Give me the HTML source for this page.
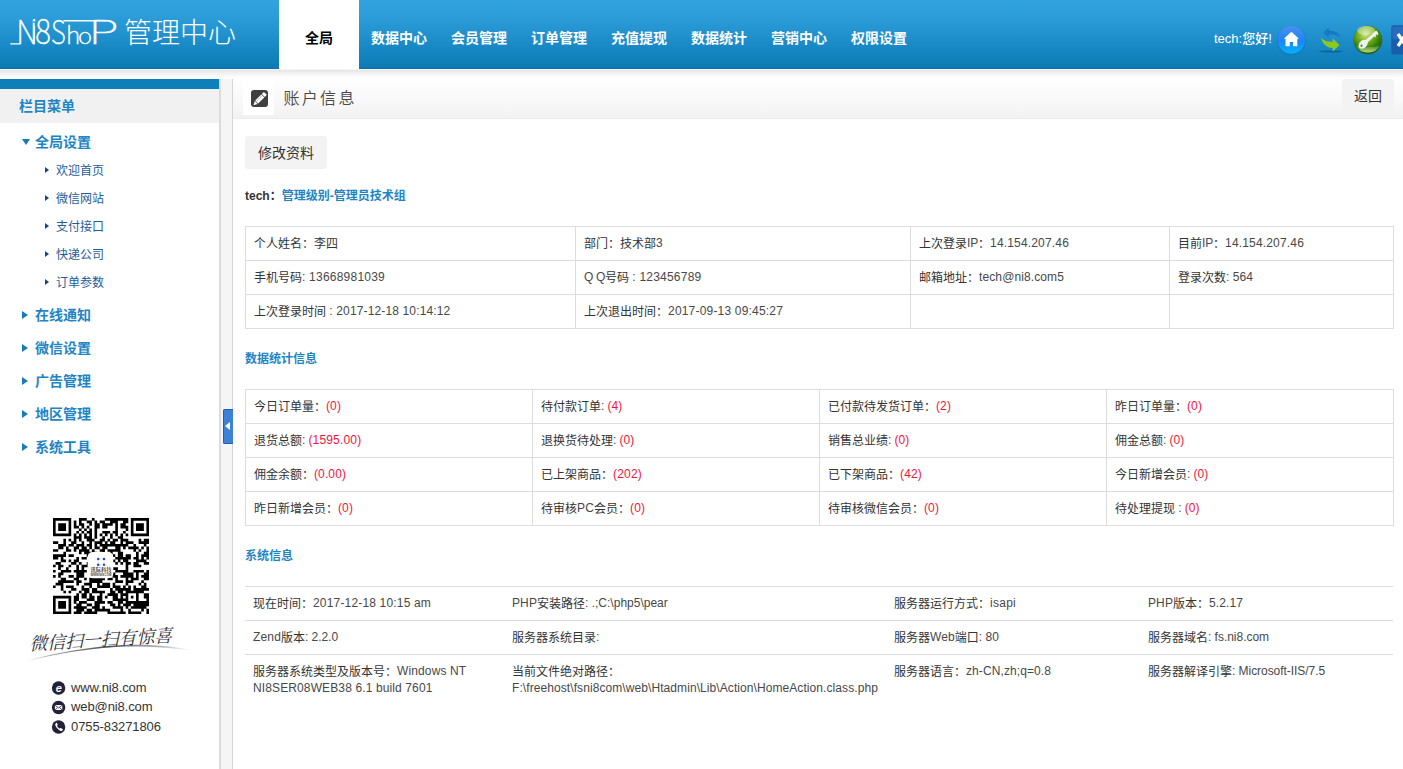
<!DOCTYPE html>
<html lang="zh-CN">
<head>
<meta charset="utf-8">
<title>Ni8Shop 管理中心</title>
<style>
*{margin:0;padding:0;box-sizing:border-box;}
html,body{width:1403px;height:769px;overflow:hidden;background:#fff;}
body{position:relative;font-family:"Liberation Sans","Noto Sans CJK SC",sans-serif;font-size:12px;color:#333;line-height:17px;}
.abs{position:absolute;}
/* ---------- header ---------- */
#hd{position:absolute;left:0;top:0;width:1403px;height:69px;background:linear-gradient(#31a3df 0,#2c9dd9 16px,#2292cf 34px,#1585c1 52px,#0e7fb9 64px,#0d7db7 64px,#0d7bb5 68px,#0a6da3 68px,#0a6da3 69px);}
#hdshadow{position:absolute;left:0;top:69px;width:1403px;height:10px;background:linear-gradient(#f6f6f2 0,#f6f6f2 1px,#e3e3e3 1px,#f1f1f1 4px,#fcfcfc 8px,#fff 10px);}
#logoTxt{position:absolute;left:124px;top:10.600px;font-size:28px;line-height:40px;color:#fff;font-weight:300;white-space:nowrap;font-family:"Noto Sans CJK SC",sans-serif;}
#nav{position:absolute;left:279px;top:0;height:69px;}
#nav a{position:absolute;top:0;width:80px;height:69px;line-height:77px;text-align:center;color:#fff;font-size:14px;font-weight:bold;text-decoration:none;white-space:nowrap;}
#nav a.on{background:#fff;color:#000;}
#hello{position:absolute;left:1214px;top:29px;font-size:13px;line-height:20px;color:#fff;white-space:nowrap;font-weight:500;}
/* ---------- sidebar ---------- */
#sb{position:absolute;left:0;top:79px;width:219px;height:690px;background:#fff;}
#sbbar{position:absolute;left:0;top:0;width:219px;height:10px;background:#0d7fb9;}
#sbtitle{position:absolute;left:0;top:10px;width:219px;height:34px;background:#f1f1f1;color:#1f84c4;font-size:14px;font-weight:bold;line-height:34px;padding-left:19px;}
#sbline{position:absolute;left:219px;top:79px;width:2px;height:690px;background:#dcdcdc;}
#gap{position:absolute;left:221px;top:79px;width:11px;height:690px;background:#f5f5f5;}
#mline{position:absolute;left:232px;top:79px;width:1px;height:690px;background:#d6d6d6;}
.g{position:absolute;left:35px;font-size:14px;font-weight:bold;color:#1f84c4;line-height:20px;white-space:nowrap;}
.s{position:absolute;left:56px;font-size:12px;color:#1f5c99;line-height:18px;margin-top:1px;white-space:nowrap;}
.ta{position:absolute;width:0;height:0;border-style:solid;}
.ct{position:absolute;left:71px;font-size:13px;color:#333;line-height:18px;white-space:nowrap;letter-spacing:-0.100px;}
/* ---------- main ---------- */
#tbar{position:absolute;left:233px;top:79px;width:1170px;height:40px;background:linear-gradient(#fefefe,#f9f9f9 50%,#f2f2f2);border-bottom:1px solid #ececec;}
#ticon{position:absolute;left:243px;top:80px;width:31px;height:35px;background:#fff;}
#ttl{position:absolute;left:283.500px;top:85px;font-size:16px;line-height:24px;letter-spacing:2.300px;color:#484848;font-weight:350;white-space:nowrap;font-family:"Noto Sans CJK SC",sans-serif;}
.btn{position:absolute;background:#f3f3f3;border-radius:3px;font-size:14px;color:#333;text-align:center;height:33px;line-height:35px;}
.h3{position:absolute;left:245px;font-size:12px;font-weight:bold;color:#1f84c4;line-height:18px;white-space:nowrap;}
table{position:absolute;left:245px;border-collapse:collapse;table-layout:fixed;}
td{border:1px solid #ddd;padding:9px 8px 6px 8px;height:34px;line-height:17px;vertical-align:top;font-size:12px;color:#333;white-space:nowrap;overflow:hidden;}
td i{font-style:normal;position:relative;top:-1px;color:#484848;}
td b{font-weight:normal;color:#f0143c;}
td b i{color:#f0143c;}
#t3 td{border-left:0;border-right:0;border-bottom:0;white-space:normal;}
</style>
</head>
<body>
<!-- HEADER -->
<div id="hd"></div>
<div id="hdshadow"></div>
<svg class="abs" style="left:5px;top:10px;" width="120" height="45" viewBox="0 0 120 45" fill="none" stroke="#fff" stroke-width="1.25" stroke-linecap="round">
<path d="M5.700 33.800H14.800"/>
<path d="M58.800 10.750H100" stroke-width="1.400"/>
<g fill="#fff" stroke="#fff" stroke-width="0.55" stroke-linejoin="round" style="vector-effect:non-scaling-stroke" font-family="Noto Sans CJK SC,Liberation Sans,sans-serif" font-weight="100">
<text vector-effect="non-scaling-stroke" transform="matrix(0.3052 0 0 0.3336 11.32 34.12)" font-size="100">N</text>
<text vector-effect="non-scaling-stroke" transform="matrix(0.1875 0 0 0.3392 26.70 34.40)" font-size="100">i</text>
<text vector-effect="non-scaling-stroke" transform="matrix(0.2989 0 0 0.3418 30.28 34.18)" font-size="100">8</text>
<text vector-effect="non-scaling-stroke" transform="matrix(0.2573 0 0 0.3327 45.99 34.19)" font-size="100">S</text>
<text vector-effect="non-scaling-stroke" transform="matrix(0.2474 0 0 0.2331 60.90 34.12)" font-size="100">h</text>
<text vector-effect="non-scaling-stroke" transform="matrix(0.2385 0 0 0.2264 73.08 34.30)" font-size="100">o</text>
<text vector-effect="non-scaling-stroke" transform="matrix(0.5011 0 0 0.3267 83.56 34.12)" font-size="100">P</text>
</g><rect x="27.500" y="11.300" width="3" height="1.500" fill="#2d9eda" stroke="none"/></svg>
<div id="logoTxt">管理中心</div>
<div id="nav">
<a class="on" style="left:0">全局</a>
<a style="left:80px">数据中心</a>
<a style="left:160px">会员管理</a>
<a style="left:240px">订单管理</a>
<a style="left:320px">充值提现</a>
<a style="left:400px">数据统计</a>
<a style="left:480px">营销中心</a>
<a style="left:560px">权限设置</a>
</div>
<div id="hello">tech:您好!</div>
<svg class="abs" style="left:1270px;top:15px;" width="133" height="50" viewBox="0 0 133 50">
<defs>
<linearGradient id="hb" x1="0" y1="0" x2="0" y2="1"><stop offset="0" stop-color="#4c8fee"/><stop offset="0.55" stop-color="#1a86f5"/><stop offset="1" stop-color="#00b4ff"/></linearGradient>
<radialGradient id="gb" cx="0.42" cy="0.3" r="0.75"><stop offset="0" stop-color="#cfe88a"/><stop offset="0.35" stop-color="#7fb520"/><stop offset="0.7" stop-color="#2f7d0a"/><stop offset="1" stop-color="#1d5c06"/></radialGradient>
<linearGradient id="gb2" x1="0" y1="0" x2="0" y2="1"><stop offset="0" stop-color="#fff" stop-opacity="0"/><stop offset="1" stop-color="#d7f07a" stop-opacity="0.85"/></linearGradient>
</defs>
<!-- home -->
<circle cx="21.300" cy="25.300" r="14.600" fill="#1565b0" opacity="0.55"/>
<circle cx="21.300" cy="24.800" r="14" fill="url(#hb)"/>
<path d="M21.400 16.800L13.800 23.700h1.700v7.600h4.300v-4.400h3.200v4.400h4.300v-7.600h1.700z" fill="#fff"/>
<!-- refresh -->
<ellipse cx="61" cy="36.500" rx="12" ry="0.900" fill="#0b5a8f" opacity="0.8"/>
<path d="M53.300 17.700l5.400-5.200v3.100c5.200-.2 9.900 1.700 11.900 6.800-3.200-2.600-7.200-3.300-11.900-2.900v3.500z" fill="#1579c4"/>
<path d="M69.500 30l-6.800-6.700v3.400c-4.400.3-8.500-.6-11.500-4 1 6.200 5.600 9.900 11.500 10.300v3.400z" fill="#8cc820"/>
<!-- green ball -->
<circle cx="97.900" cy="25.200" r="14.500" fill="#2a5f0c" opacity="0.5"/>
<circle cx="97.900" cy="24.900" r="14" fill="url(#gb)"/>
<path d="M85.500 30a14 14 0 0 0 24.800 0c-8 3-17 3-24.800 0z" fill="url(#gb2)"/>
<ellipse cx="96" cy="15.500" rx="9" ry="4.500" fill="#fff" opacity="0.35"/>
<g transform="rotate(-42 97.900 25)"><rect x="95" y="23.500" width="15.500" height="3" rx="1" fill="#f1f1f1"/><rect x="105" y="25.500" width="1.800" height="2.300" fill="#f1f1f1"/><rect x="108" y="25.500" width="1.800" height="2.300" fill="#f1f1f1"/><ellipse cx="91.500" cy="25" rx="5.200" ry="3.800" fill="#f1f1f1"/><circle cx="89.300" cy="25" r="1.100" fill="#3d8a12"/></g>
<!-- close -->
<rect x="121.300" y="10.200" width="20" height="29.200" rx="2.500" fill="#1b5cab"/>
<rect x="122.300" y="11.400" width="19" height="13" rx="1.500" fill="#2f74c4" opacity="0.7"/>
<path d="M128 19l8 12M128 31l8-12" stroke="#fff" stroke-width="3.200" fill="none"/>
</svg>

<!-- SIDEBAR -->
<div id="sb">
<div id="sbbar"></div>
<div id="sbtitle">栏目菜单</div>
</div>
<div id="sbline"></div><div id="gap"></div><div id="mline"></div>
<div class="ta" style="left:21.500px;top:138.800px;border-width:6.500px 4px 0 4px;border-color:#1a7ab8 transparent transparent transparent;"></div>
<div class="g" style="top:132px;">全局设置</div>
<div class="ta" style="left:45px;top:167.0px;border-width:3px 0 3px 4px;border-color:transparent transparent transparent #17468a;"></div>
<div class="s" style="top:161.0px;">欢迎首页</div>
<div class="ta" style="left:45px;top:195.0px;border-width:3px 0 3px 4px;border-color:transparent transparent transparent #17468a;"></div>
<div class="s" style="top:189.0px;">微信网站</div>
<div class="ta" style="left:45px;top:223.0px;border-width:3px 0 3px 4px;border-color:transparent transparent transparent #17468a;"></div>
<div class="s" style="top:217.0px;">支付接口</div>
<div class="ta" style="left:45px;top:251.0px;border-width:3px 0 3px 4px;border-color:transparent transparent transparent #17468a;"></div>
<div class="s" style="top:245.0px;">快递公司</div>
<div class="ta" style="left:45px;top:279.0px;border-width:3px 0 3px 4px;border-color:transparent transparent transparent #17468a;"></div>
<div class="s" style="top:273.0px;">订单参数</div>
<div class="ta" style="left:21.500px;top:311.0px;border-width:4px 0 4px 6.500px;border-color:transparent transparent transparent #1a7ab8;"></div>
<div class="g" style="top:305px;">在线通知</div>
<div class="ta" style="left:21.500px;top:344.0px;border-width:4px 0 4px 6.500px;border-color:transparent transparent transparent #1a7ab8;"></div>
<div class="g" style="top:338px;">微信设置</div>
<div class="ta" style="left:21.500px;top:377.0px;border-width:4px 0 4px 6.500px;border-color:transparent transparent transparent #1a7ab8;"></div>
<div class="g" style="top:371px;">广告管理</div>
<div class="ta" style="left:21.500px;top:410.0px;border-width:4px 0 4px 6.500px;border-color:transparent transparent transparent #1a7ab8;"></div>
<div class="g" style="top:404px;">地区管理</div>
<div class="ta" style="left:21.500px;top:443.0px;border-width:4px 0 4px 6.500px;border-color:transparent transparent transparent #1a7ab8;"></div>
<div class="g" style="top:437px;">系统工具</div>
<div class="abs" style="left:223px;top:409px;width:9.500px;height:35px;background:#3d82d8;border:1px solid #1c60b8;border-right:0;border-radius:2px 0 0 2px;"></div>
<div class="ta" style="left:225px;top:421.5px;border-width:4.5px 5px 4.5px 0;border-color:transparent #fff transparent transparent;"></div>
<svg class="abs" style="left:53px;top:518px;" width="96" height="96" viewBox="0 0 96 96"><rect width="96" height="96" fill="#fff"/><path d="M0.00 0.00h18.21v2.64h-18.21zM25.95 0.00h7.83v2.64h-7.83zM38.92 0.00h2.64v2.64h-2.64zM51.89 0.00h23.40v2.64h-23.40zM77.84 0.00h18.21v2.64h-18.21zM0.00 2.59h2.64v2.64h-2.64zM15.57 2.59h2.64v2.64h-2.64zM20.76 2.59h2.64v2.64h-2.64zM25.95 2.59h2.64v2.64h-2.64zM33.73 2.59h5.24v2.64h-5.24zM41.51 2.59h2.64v2.64h-2.64zM46.70 2.59h5.24v2.64h-5.24zM57.08 2.59h7.83v2.64h-7.83zM70.05 2.59h5.24v2.64h-5.24zM77.84 2.59h2.64v2.64h-2.64zM93.41 2.59h2.64v2.64h-2.64zM0.00 5.19h2.64v2.64h-2.64zM5.19 5.19h7.83v2.64h-7.83zM15.57 5.19h2.64v2.64h-2.64zM20.76 5.19h2.64v2.64h-2.64zM25.95 5.19h5.24v2.64h-5.24zM36.32 5.19h2.64v2.64h-2.64zM41.51 5.19h5.24v2.64h-5.24zM49.30 5.19h10.43v2.64h-10.43zM62.27 5.19h2.64v2.64h-2.64zM67.46 5.19h5.24v2.64h-5.24zM77.84 5.19h2.64v2.64h-2.64zM83.03 5.19h7.83v2.64h-7.83zM93.41 5.19h2.64v2.64h-2.64zM0.00 7.78h2.64v2.64h-2.64zM5.19 7.78h7.83v2.64h-7.83zM15.57 7.78h2.64v2.64h-2.64zM20.76 7.78h5.24v2.64h-5.24zM28.54 7.78h2.64v2.64h-2.64zM33.73 7.78h2.64v2.64h-2.64zM41.51 7.78h5.24v2.64h-5.24zM49.30 7.78h5.24v2.64h-5.24zM62.27 7.78h2.64v2.64h-2.64zM67.46 7.78h7.83v2.64h-7.83zM77.84 7.78h2.64v2.64h-2.64zM83.03 7.78h7.83v2.64h-7.83zM93.41 7.78h2.64v2.64h-2.64zM0.00 10.38h2.64v2.64h-2.64zM5.19 10.38h7.83v2.64h-7.83zM15.57 10.38h2.64v2.64h-2.64zM25.95 10.38h2.64v2.64h-2.64zM31.14 10.38h2.64v2.64h-2.64zM36.32 10.38h2.64v2.64h-2.64zM41.51 10.38h2.64v2.64h-2.64zM62.27 10.38h2.64v2.64h-2.64zM72.65 10.38h2.64v2.64h-2.64zM77.84 10.38h2.64v2.64h-2.64zM83.03 10.38h7.83v2.64h-7.83zM93.41 10.38h2.64v2.64h-2.64zM0.00 12.97h2.64v2.64h-2.64zM15.57 12.97h2.64v2.64h-2.64zM23.35 12.97h2.64v2.64h-2.64zM28.54 12.97h2.64v2.64h-2.64zM33.73 12.97h5.24v2.64h-5.24zM41.51 12.97h2.64v2.64h-2.64zM49.30 12.97h7.83v2.64h-7.83zM59.68 12.97h5.24v2.64h-5.24zM70.05 12.97h2.64v2.64h-2.64zM77.84 12.97h2.64v2.64h-2.64zM93.41 12.97h2.64v2.64h-2.64zM0.00 15.57h18.21v2.64h-18.21zM20.76 15.57h2.64v2.64h-2.64zM25.95 15.57h2.64v2.64h-2.64zM31.14 15.57h2.64v2.64h-2.64zM36.32 15.57h2.64v2.64h-2.64zM41.51 15.57h2.64v2.64h-2.64zM46.70 15.57h2.64v2.64h-2.64zM51.89 15.57h2.64v2.64h-2.64zM57.08 15.57h2.64v2.64h-2.64zM62.27 15.57h2.64v2.64h-2.64zM67.46 15.57h2.64v2.64h-2.64zM72.65 15.57h2.64v2.64h-2.64zM77.84 15.57h18.21v2.64h-18.21zM20.76 18.16h7.83v2.64h-7.83zM31.14 18.16h7.83v2.64h-7.83zM41.51 18.16h2.64v2.64h-2.64zM49.30 18.16h2.64v2.64h-2.64zM57.08 18.16h2.64v2.64h-2.64zM64.86 18.16h5.24v2.64h-5.24zM10.38 20.76h2.64v2.64h-2.64zM15.57 20.76h2.64v2.64h-2.64zM20.76 20.76h2.64v2.64h-2.64zM25.95 20.76h2.64v2.64h-2.64zM33.73 20.76h7.83v2.64h-7.83zM46.70 20.76h5.24v2.64h-5.24zM54.49 20.76h2.64v2.64h-2.64zM59.68 20.76h5.24v2.64h-5.24zM67.46 20.76h7.83v2.64h-7.83zM85.62 20.76h2.64v2.64h-2.64zM90.81 20.76h5.24v2.64h-5.24zM0.00 23.35h5.24v2.64h-5.24zM10.38 23.35h2.64v2.64h-2.64zM18.16 23.35h5.24v2.64h-5.24zM28.54 23.35h2.64v2.64h-2.64zM36.32 23.35h2.64v2.64h-2.64zM41.51 23.35h7.83v2.64h-7.83zM51.89 23.35h2.64v2.64h-2.64zM57.08 23.35h5.24v2.64h-5.24zM67.46 23.35h2.64v2.64h-2.64zM72.65 23.35h7.83v2.64h-7.83zM85.62 23.35h10.43v2.64h-10.43zM5.19 25.95h7.83v2.64h-7.83zM15.57 25.95h5.24v2.64h-5.24zM23.35 25.95h7.83v2.64h-7.83zM33.73 25.95h5.24v2.64h-5.24zM41.51 25.95h2.64v2.64h-2.64zM46.70 25.95h28.59v2.64h-28.59zM80.43 25.95h2.64v2.64h-2.64zM90.81 25.95h2.64v2.64h-2.64zM5.19 28.54h5.24v2.64h-5.24zM12.97 28.54h2.64v2.64h-2.64zM20.76 28.54h5.24v2.64h-5.24zM28.54 28.54h5.24v2.64h-5.24zM36.32 28.54h2.64v2.64h-2.64zM41.51 28.54h5.24v2.64h-5.24zM49.30 28.54h5.24v2.64h-5.24zM62.27 28.54h5.24v2.64h-5.24zM70.05 28.54h2.64v2.64h-2.64zM75.24 28.54h10.43v2.64h-10.43zM88.22 28.54h2.64v2.64h-2.64zM93.41 28.54h2.64v2.64h-2.64zM0.00 31.14h5.24v2.64h-5.24zM12.97 31.14h5.24v2.64h-5.24zM20.76 31.14h2.64v2.64h-2.64zM25.95 31.14h10.43v2.64h-10.43zM38.92 31.14h2.64v2.64h-2.64zM46.70 31.14h5.24v2.64h-5.24zM54.49 31.14h13.02v2.64h-13.02zM80.43 31.14h2.64v2.64h-2.64zM85.62 31.14h2.64v2.64h-2.64zM93.41 31.14h2.64v2.64h-2.64zM10.38 33.73h2.64v2.64h-2.64zM25.95 33.73h2.64v2.64h-2.64zM31.14 33.73h13.02v2.64h-13.02zM49.30 33.73h2.64v2.64h-2.64zM57.08 33.73h2.64v2.64h-2.64zM64.86 33.73h5.24v2.64h-5.24zM83.03 33.73h2.64v2.64h-2.64zM90.81 33.73h5.24v2.64h-5.24zM0.00 36.32h13.02v2.64h-13.02zM15.57 36.32h5.24v2.64h-5.24zM33.73 36.32h2.64v2.64h-2.64zM59.68 36.32h2.64v2.64h-2.64zM64.86 36.32h5.24v2.64h-5.24zM72.65 36.32h5.24v2.64h-5.24zM83.03 36.32h2.64v2.64h-2.64zM88.22 36.32h7.83v2.64h-7.83zM0.00 38.92h5.24v2.64h-5.24zM7.78 38.92h2.64v2.64h-2.64zM23.35 38.92h2.64v2.64h-2.64zM28.54 38.92h5.24v2.64h-5.24zM62.27 38.92h15.62v2.64h-15.62zM80.43 38.92h5.24v2.64h-5.24zM88.22 38.92h2.64v2.64h-2.64zM93.41 38.92h2.64v2.64h-2.64zM7.78 41.51h5.24v2.64h-5.24zM15.57 41.51h2.64v2.64h-2.64zM20.76 41.51h5.24v2.64h-5.24zM59.68 41.51h2.64v2.64h-2.64zM64.86 41.51h2.64v2.64h-2.64zM70.05 41.51h5.24v2.64h-5.24zM83.03 41.51h10.43v2.64h-10.43zM2.59 44.11h5.24v2.64h-5.24zM18.16 44.11h5.24v2.64h-5.24zM25.95 44.11h2.64v2.64h-2.64zM33.73 44.11h2.64v2.64h-2.64zM62.27 44.11h2.64v2.64h-2.64zM67.46 44.11h2.64v2.64h-2.64zM72.65 44.11h5.24v2.64h-5.24zM80.43 44.11h5.24v2.64h-5.24zM90.81 44.11h5.24v2.64h-5.24zM0.00 46.70h2.64v2.64h-2.64zM5.19 46.70h5.24v2.64h-5.24zM15.57 46.70h2.64v2.64h-2.64zM23.35 46.70h2.64v2.64h-2.64zM28.54 46.70h7.83v2.64h-7.83zM72.65 46.70h2.64v2.64h-2.64zM80.43 46.70h7.83v2.64h-7.83zM5.19 49.30h2.64v2.64h-2.64zM12.97 49.30h2.64v2.64h-2.64zM23.35 49.30h2.64v2.64h-2.64zM28.54 49.30h2.64v2.64h-2.64zM59.68 49.30h5.24v2.64h-5.24zM72.65 49.30h2.64v2.64h-2.64zM0.00 51.89h2.64v2.64h-2.64zM7.78 51.89h10.43v2.64h-10.43zM20.76 51.89h13.02v2.64h-13.02zM62.27 51.89h13.02v2.64h-13.02zM80.43 51.89h10.43v2.64h-10.43zM93.41 51.89h2.64v2.64h-2.64zM5.19 54.49h5.24v2.64h-5.24zM23.35 54.49h7.83v2.64h-7.83zM59.68 54.49h2.64v2.64h-2.64zM70.05 54.49h10.43v2.64h-10.43zM83.03 54.49h2.64v2.64h-2.64zM90.81 54.49h5.24v2.64h-5.24zM0.00 57.08h2.64v2.64h-2.64zM5.19 57.08h2.64v2.64h-2.64zM15.57 57.08h5.24v2.64h-5.24zM23.35 57.08h7.83v2.64h-7.83zM59.68 57.08h5.24v2.64h-5.24zM67.46 57.08h13.02v2.64h-13.02zM83.03 57.08h2.64v2.64h-2.64zM88.22 57.08h7.83v2.64h-7.83zM7.78 59.68h5.24v2.64h-5.24zM20.76 59.68h5.24v2.64h-5.24zM31.14 59.68h2.64v2.64h-2.64zM36.32 59.68h15.62v2.64h-15.62zM54.49 59.68h5.24v2.64h-5.24zM62.27 59.68h2.64v2.64h-2.64zM72.65 59.68h2.64v2.64h-2.64zM77.84 59.68h7.83v2.64h-7.83zM90.81 59.68h5.24v2.64h-5.24zM5.19 62.27h15.62v2.64h-15.62zM23.35 62.27h5.24v2.64h-5.24zM36.32 62.27h13.02v2.64h-13.02zM62.27 62.27h7.83v2.64h-7.83zM72.65 62.27h7.83v2.64h-7.83zM88.22 62.27h2.64v2.64h-2.64zM2.59 64.86h7.83v2.64h-7.83zM23.35 64.86h2.64v2.64h-2.64zM31.14 64.86h7.83v2.64h-7.83zM44.11 64.86h2.64v2.64h-2.64zM49.30 64.86h7.83v2.64h-7.83zM59.68 64.86h2.64v2.64h-2.64zM72.65 64.86h2.64v2.64h-2.64zM85.62 64.86h2.64v2.64h-2.64zM90.81 64.86h2.64v2.64h-2.64zM0.00 67.46h2.64v2.64h-2.64zM7.78 67.46h2.64v2.64h-2.64zM12.97 67.46h7.83v2.64h-7.83zM28.54 67.46h2.64v2.64h-2.64zM36.32 67.46h2.64v2.64h-2.64zM44.11 67.46h13.02v2.64h-13.02zM59.68 67.46h7.83v2.64h-7.83zM70.05 67.46h2.64v2.64h-2.64zM75.24 67.46h2.64v2.64h-2.64zM80.43 67.46h2.64v2.64h-2.64zM88.22 67.46h5.24v2.64h-5.24zM7.78 70.05h2.64v2.64h-2.64zM18.16 70.05h5.24v2.64h-5.24zM28.54 70.05h7.83v2.64h-7.83zM38.92 70.05h5.24v2.64h-5.24zM57.08 70.05h2.64v2.64h-2.64zM62.27 70.05h15.62v2.64h-15.62zM80.43 70.05h15.62v2.64h-15.62zM10.38 72.65h2.64v2.64h-2.64zM15.57 72.65h2.64v2.64h-2.64zM25.95 72.65h2.64v2.64h-2.64zM31.14 72.65h5.24v2.64h-5.24zM38.92 72.65h13.02v2.64h-13.02zM57.08 72.65h5.24v2.64h-5.24zM64.86 72.65h5.24v2.64h-5.24zM72.65 72.65h18.21v2.64h-18.21zM23.35 75.24h2.64v2.64h-2.64zM28.54 75.24h5.24v2.64h-5.24zM36.32 75.24h2.64v2.64h-2.64zM46.70 75.24h2.64v2.64h-2.64zM54.49 75.24h10.43v2.64h-10.43zM67.46 75.24h7.83v2.64h-7.83zM83.03 75.24h2.64v2.64h-2.64zM90.81 75.24h5.24v2.64h-5.24zM0.00 77.84h18.21v2.64h-18.21zM20.76 77.84h5.24v2.64h-5.24zM28.54 77.84h5.24v2.64h-5.24zM36.32 77.84h5.24v2.64h-5.24zM44.11 77.84h5.24v2.64h-5.24zM51.89 77.84h2.64v2.64h-2.64zM59.68 77.84h5.24v2.64h-5.24zM67.46 77.84h2.64v2.64h-2.64zM72.65 77.84h2.64v2.64h-2.64zM77.84 77.84h2.64v2.64h-2.64zM83.03 77.84h2.64v2.64h-2.64zM90.81 77.84h5.24v2.64h-5.24zM0.00 80.43h2.64v2.64h-2.64zM15.57 80.43h2.64v2.64h-2.64zM20.76 80.43h5.24v2.64h-5.24zM33.73 80.43h7.83v2.64h-7.83zM44.11 80.43h5.24v2.64h-5.24zM59.68 80.43h15.62v2.64h-15.62zM83.03 80.43h2.64v2.64h-2.64zM93.41 80.43h2.64v2.64h-2.64zM0.00 83.03h2.64v2.64h-2.64zM5.19 83.03h7.83v2.64h-7.83zM15.57 83.03h2.64v2.64h-2.64zM20.76 83.03h2.64v2.64h-2.64zM25.95 83.03h7.83v2.64h-7.83zM41.51 83.03h10.43v2.64h-10.43zM54.49 83.03h5.24v2.64h-5.24zM64.86 83.03h5.24v2.64h-5.24zM72.65 83.03h23.40v2.64h-23.40zM0.00 85.62h2.64v2.64h-2.64zM5.19 85.62h7.83v2.64h-7.83zM15.57 85.62h2.64v2.64h-2.64zM23.35 85.62h5.24v2.64h-5.24zM33.73 85.62h5.24v2.64h-5.24zM41.51 85.62h5.24v2.64h-5.24zM57.08 85.62h5.24v2.64h-5.24zM64.86 85.62h2.64v2.64h-2.64zM70.05 85.62h7.83v2.64h-7.83zM80.43 85.62h15.62v2.64h-15.62zM0.00 88.22h2.64v2.64h-2.64zM5.19 88.22h7.83v2.64h-7.83zM15.57 88.22h2.64v2.64h-2.64zM20.76 88.22h13.02v2.64h-13.02zM38.92 88.22h7.83v2.64h-7.83zM49.30 88.22h2.64v2.64h-2.64zM59.68 88.22h10.43v2.64h-10.43zM72.65 88.22h2.64v2.64h-2.64zM77.84 88.22h15.62v2.64h-15.62zM0.00 90.81h2.64v2.64h-2.64zM15.57 90.81h2.64v2.64h-2.64zM23.35 90.81h7.83v2.64h-7.83zM33.73 90.81h5.24v2.64h-5.24zM41.51 90.81h15.62v2.64h-15.62zM67.46 90.81h2.64v2.64h-2.64zM75.24 90.81h2.64v2.64h-2.64zM88.22 90.81h2.64v2.64h-2.64zM93.41 90.81h2.64v2.64h-2.64zM0.00 93.41h18.21v2.64h-18.21zM20.76 93.41h7.83v2.64h-7.83zM31.14 93.41h13.02v2.64h-13.02zM54.49 93.41h18.21v2.64h-18.21zM75.24 93.41h13.02v2.64h-13.02zM93.41 93.41h2.64v2.64h-2.64z" fill="#000"/><rect x="34.600" y="34" width="25.700" height="26.300" rx="5" fill="#fff"/><circle cx="45.2" cy="41.0" r="1.25" fill="#2446cc"/><circle cx="51.0" cy="41.0" r="1.25" fill="#2446cc"/><circle cx="45.2" cy="46.8" r="1.25" fill="#2446cc"/><circle cx="51.0" cy="46.8" r="1.25" fill="#2446cc"/><path d="M46.600 41h3M46.600 46.800h3M45.200 42.400v3M51 42.400v3" stroke="#c8ccd8" stroke-width="0.500"/><text x="47.900" y="54.400" font-size="5.200" text-anchor="middle" fill="#3a3a3a" font-family="Noto Serif CJK SC,serif" font-weight="700" textLength="21" lengthAdjust="spacing">讯际科技</text><text x="47.900" y="58.200" font-size="3.300" text-anchor="middle" fill="#444" font-family="Liberation Sans,sans-serif" font-weight="bold" textLength="21" lengthAdjust="spacingAndGlyphs">WWW.NI8.COM</text></svg>
<svg class="abs" style="left:15px;top:615px;" width="200" height="55" viewBox="0 0 200 55"><defs><linearGradient id="sw" x1="0" x2="1" y1="0" y2="0"><stop offset="0" stop-color="#999" stop-opacity="0"/><stop offset="0.18" stop-color="#777" stop-opacity="0.7"/><stop offset="0.5" stop-color="#444" stop-opacity="0.95"/><stop offset="0.8" stop-color="#888" stop-opacity="0.6"/><stop offset="1" stop-color="#bbb" stop-opacity="0"/></linearGradient></defs><path d="M6 47.500 C 40 37.500, 80 30.800, 112 29.800 C 140 29.200, 165 32, 182 36.500 C 160 33, 138 31.400, 112 31.600 C 82 32.200, 42 38.500, 6 47.500z" fill="url(#sw)"/><text transform="translate(14.500,35.500) rotate(-3.600) skewX(-16)" font-size="18" font-family="Noto Serif CJK SC,serif" font-weight="400" fill="#30303a" textLength="143" lengthAdjust="spacing">微信扫一扫有惊喜</text></svg>
<div class="ct" style="top:678.5px;">www.ni8.com</div>
<div class="ct" style="top:698.0px;">web@ni8.com</div>
<div class="ct" style="top:717.5px;">0755-83271806</div>
<svg class="abs" style="left:51px;top:680px;" width="16" height="56" viewBox="0 0 16 56"><circle cx="7.6" cy="8.0" r="6.7" fill="#24223b"/><circle cx="7.6" cy="27.5" r="6.7" fill="#24223b"/><circle cx="7.6" cy="47.0" r="6.7" fill="#24223b"/><text x="7.8" y="11.6" font-size="11" font-weight="bold" font-style="italic" text-anchor="middle" fill="#fff" font-family="Liberation Sans,sans-serif">e</text><rect x="3.9" y="24.9" width="7.4" height="5.2" rx="0.8" fill="#fff"/><path d="M4.2 25.3l3.4 2.6 3.4-2.6M4.2 29.8l2.4-2.2M11 29.8l-2.4-2.2" stroke="#24223b" stroke-width="0.8" fill="none"/><path d="M5 43.2c-.9.5-1 1.5-.5 2.6 1 2.1 2.6 3.8 4.7 4.9 1 .5 2 .3 2.5-.5.3-.4.2-.8-.2-1.1l-1.3-.9c-.4-.3-.8-.2-1.1.1l-.4.5c-1.200-.7-2.100-1.700-2.800-3l.5-.4c.4-.3.500-.7.200-1.100l-.8-1.300c-.2-.4-.6-.5-.8-.2z" fill="#fff"/></svg>
<!--SIDEITEMS-->

<!-- MAIN -->
<div id="tbar"></div>
<div id="ticon"></div>
<svg class="abs" style="left:251px;top:90px;" width="17" height="17" viewBox="0 0 17 17"><rect width="17" height="17" rx="3" fill="#403e3e"/><g transform="rotate(45 8.400 9.300)" fill="#fff"><rect x="6.300" y="0.900" width="4.200" height="2.900"/><rect x="6.300" y="4.500" width="4.200" height="8.700"/><path d="M6.300 13.800h4.200l-2.100 3.800z"/><path d="M7.700 5.200v7.400" stroke="#403e3e" stroke-width="0.450" stroke-dasharray="1 0.600"/></g></svg>
<div id="ttl">账户信息</div>
<div class="btn" style="left:1342px;top:79px;width:52px;">返回</div>
<div class="btn" style="left:245px;top:136px;width:82px;">修改资料</div>
<div class="abs" style="left:245px;top:187px;font-size:12px;font-weight:bold;line-height:18px;white-space:nowrap;color:#333;">tech：<span style="color:#1f84c4">管理级别-管理员技术组</span></div>
<table id="t1" style="top:226px;width:1148px;">
<colgroup><col style="width:330px"><col style="width:335px"><col style="width:259px"><col style="width:224px"></colgroup>
<tr><td>个人姓名：李四</td><td>部门：技术部<i style="letter-spacing:0.33px">3</i></td><td>上次登录<i style="letter-spacing:-0.17px">IP</i>：<i style="letter-spacing:0.17px">14.154.207.46</i></td><td>目前<i style="letter-spacing:-0.17px">IP</i>：<i style="letter-spacing:0.17px">14.154.207.46</i></td></tr>
<tr><td>手机号码<i style="letter-spacing:0.22px">: 13668981039</i></td><td><i style="letter-spacing:-0.33px">Q Q</i>号码 <i style="letter-spacing:0.21px">: 123456789</i></td><td>邮箱地址：<i style="letter-spacing:0.11px">tech@ni8.com5</i></td><td>登录次数<i style="letter-spacing:0.06px">: 564</i></td></tr>
<tr><td>上次登录时间 <i style="letter-spacing:0.14px">: 2017-12-18 10:14:12</i></td><td>上次退出时间：<i style="letter-spacing:0.19px">2017-09-13 09:45:27</i></td><td></td><td></td></tr>
</table>
<div class="h3" style="top:350px;">数据统计信息</div>
<table id="t2" style="top:389px;width:1148px;">
<colgroup><col style="width:287px"><col style="width:287px"><col style="width:287px"><col style="width:287px"></colgroup>
<tr><td>今日订单量：<b><i style="letter-spacing:0.11px">(0)</i></b></td><td>待付款订单<i style="letter-spacing:-0.33px">:</i> <b><i style="letter-spacing:0.11px">(4)</i></b></td><td>已付款待发货订单：<b><i style="letter-spacing:0.11px">(2)</i></b></td><td>昨日订单量：<b><i style="letter-spacing:0.11px">(0)</i></b></td></tr>
<tr><td>退货总额<i style="letter-spacing:-0.33px">:</i> <b><i style="letter-spacing:0.18px">(1595.00)</i></b></td><td>退换货待处理<i style="letter-spacing:-0.33px">:</i> <b><i style="letter-spacing:0.11px">(0)</i></b></td><td>销售总业绩<i style="letter-spacing:-0.33px">:</i> <b><i style="letter-spacing:0.11px">(0)</i></b></td><td>佣金总额<i style="letter-spacing:-0.33px">:</i> <b><i style="letter-spacing:0.11px">(0)</i></b></td></tr>
<tr><td>佣金余额：<b><i style="letter-spacing:0.11px">(0.00)</i></b></td><td>已上架商品：<b><i style="letter-spacing:0.20px">(202)</i></b></td><td>已下架商品：<b><i style="letter-spacing:0.17px">(42)</i></b></td><td>今日新增会员<i style="letter-spacing:-0.33px">:</i> <b><i style="letter-spacing:0.11px">(0)</i></b></td></tr>
<tr><td>昨日新增会员：<b><i style="letter-spacing:0.11px">(0)</i></b></td><td>待审核<i style="letter-spacing:0.17px">PC</i>会员：<b><i style="letter-spacing:0.11px">(0)</i></b></td><td>待审核微信会员：<b><i style="letter-spacing:0.11px">(0)</i></b></td><td>待处理提现 <i style="letter-spacing:-0.33px">:</i> <b><i style="letter-spacing:0.11px">(0)</i></b></td></tr>
</table>
<div class="h3" style="top:547px;">系统信息</div>
<table id="t3" style="top:586px;width:1148px;">
<colgroup><col style="width:259px"><col style="width:382px"><col style="width:254px"><col style="width:253px"></colgroup>
<tr><td>现在时间：<i style="letter-spacing:0.17px">2017-12-18 10:15 am</i></td><td><i style="letter-spacing:0.11px">PHP</i>安装路径<i>: .;C:\php5\pear</i></td><td>服务器运行方式：<i style="letter-spacing:0.26px">isapi</i></td><td><i style="letter-spacing:0.11px">PHP</i>版本：<i style="letter-spacing:0.11px">5.2.17</i></td></tr>
<tr><td><i style="letter-spacing:0.16px">Zend</i>版本<i style="letter-spacing:-0.05px">: 2.2.0</i></td><td>服务器系统目录<i style="letter-spacing:-0.33px">:</i></td><td>服务器<i style="letter-spacing:0.11px">Web</i>端口<i>: 80</i></td><td>服务器域名<i style="letter-spacing:-0.03px">: fs.ni8.com</i></td></tr>
<tr><td>服务器系统类型及版本号：<i style="letter-spacing:0.12px">Windows NT NI8SER08WEB38 6.1 build 7601</i></td><td>当前文件绝对路径：<i style="letter-spacing:0.08px">F:\freehost\fsni8com\web\Htadmin\Lib\Action\HomeAction.class.php</i></td><td>服务器语言：<i style="letter-spacing:0.09px">zh-CN,zh;q=0.8</i></td><td>服务器解译引擎<i style="letter-spacing:-0.05px">: Microsoft-IIS/7.5</i></td></tr>
</table>
<!--MAINBODY-->
</body>
</html>
